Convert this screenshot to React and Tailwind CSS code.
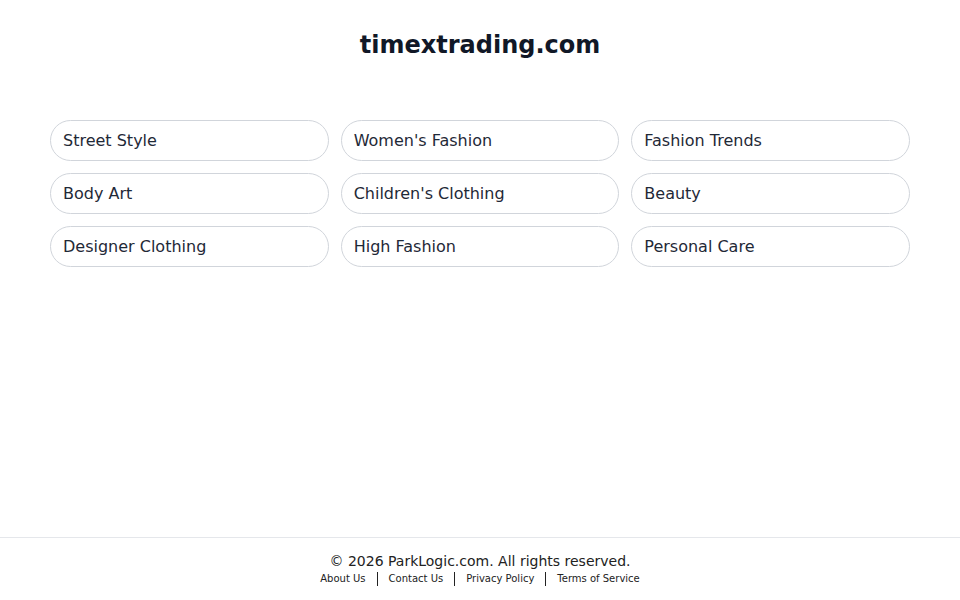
import React from "react";

const items = [
  "Street Style",
  "Women's Fashion",
  "Fashion Trends",
  "Body Art",
  "Children's Clothing",
  "Beauty",
  "Designer Clothing",
  "High Fashion",
  "Personal Care",
];

const links = ["About Us", "Contact Us", "Privacy Policy", "Terms of Service"];

export default function App() {
  return (
    <div
      className="min-h-screen flex flex-col bg-white text-[#111827]"
      style={{ fontFamily: '"DejaVu Sans", sans-serif' }}
    >
      <main className="flex-1">
        <h1 className="pt-[29px] text-center text-[24px] leading-[32px] font-bold text-[#111827]">
          timextrading.com
        </h1>
        <div className="mt-[59px] px-[50px] grid grid-cols-3 gap-x-3 gap-y-3">
          {items.map((t) => (
            <a
              key={t}
              href="#"
              className="h-[41px] flex items-center pl-[12px] rounded-full border border-[#d1d5db] text-[16px] text-[#1f2937]"
            >
              {t}
            </a>
          ))}
        </div>
      </main>
      <footer className="border-t border-[#e5e7eb] h-[63px] flex flex-col items-center pt-[14px]">
        <p className="text-[14px] leading-[18px] text-[#222]">
          © 2026 ParkLogic.com. All rights reserved.
        </p>
        <div className="flex items-center mt-[2px] text-[10px] leading-[14px] text-[#222]">
          {links.map((l, i) => (
            <React.Fragment key={l}>
              {i > 0 && <span className="mx-[11px] w-px h-[14px] bg-[#222]" />}
              <a href="#">{l}</a>
            </React.Fragment>
          ))}
        </div>
      </footer>
    </div>
  );
}
